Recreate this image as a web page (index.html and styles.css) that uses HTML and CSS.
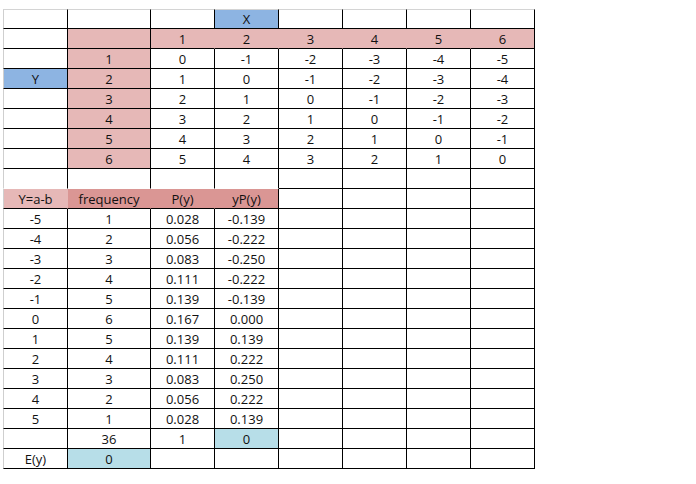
FILE: index.html
```html
<!DOCTYPE html>
<html>
<head>
<meta charset="utf-8">
<link rel="stylesheet" href="styles.css">
</head>
<body>
<div class="sheet">
  <div class="c a t"></div><div class="c t"></div><div class="c t"></div><div class="c t bl">X</div><div class="c t"></div><div class="c t"></div><div class="c t"></div><div class="c t"></div>

  <div class="c a"></div><div class="c pk"></div><div class="c pk nr">1</div><div class="c pk nr">2</div><div class="c pk nr">3</div><div class="c pk nr">4</div><div class="c pk nr">5</div><div class="c pk">6</div>

  <div class="c a"></div><div class="c pk">1</div><div class="c">0</div><div class="c">-1</div><div class="c">-2</div><div class="c">-3</div><div class="c">-4</div><div class="c">-5</div>
  <div class="c a bl">Y</div><div class="c pk">2</div><div class="c">1</div><div class="c">0</div><div class="c">-1</div><div class="c">-2</div><div class="c">-3</div><div class="c">-4</div>
  <div class="c a"></div><div class="c pk">3</div><div class="c">2</div><div class="c">1</div><div class="c">0</div><div class="c">-1</div><div class="c">-2</div><div class="c">-3</div>
  <div class="c a"></div><div class="c pk">4</div><div class="c">3</div><div class="c">2</div><div class="c">1</div><div class="c">0</div><div class="c">-1</div><div class="c">-2</div>
  <div class="c a"></div><div class="c pk">5</div><div class="c">4</div><div class="c">3</div><div class="c">2</div><div class="c">1</div><div class="c">0</div><div class="c">-1</div>
  <div class="c a"></div><div class="c pk">6</div><div class="c">5</div><div class="c">4</div><div class="c">3</div><div class="c">2</div><div class="c">1</div><div class="c">0</div>

  <div class="c a nb"></div><div class="c nb"></div><div class="c nb"></div><div class="c nb"></div><div class="c"></div><div class="c"></div><div class="c"></div><div class="c"></div>

  <div class="c a pk nr">Y=a-b</div><div class="c pd nr">frequency</div><div class="c pd nr">P(y)</div><div class="c pd">yP(y)</div><div class="c"></div><div class="c"></div><div class="c"></div><div class="c"></div>

  <div class="c a">-5</div><div class="c">1</div><div class="c">0.028</div><div class="c">-0.139</div><div class="c"></div><div class="c"></div><div class="c"></div><div class="c"></div>
  <div class="c a">-4</div><div class="c">2</div><div class="c">0.056</div><div class="c">-0.222</div><div class="c"></div><div class="c"></div><div class="c"></div><div class="c"></div>
  <div class="c a">-3</div><div class="c">3</div><div class="c">0.083</div><div class="c">-0.250</div><div class="c"></div><div class="c"></div><div class="c"></div><div class="c"></div>
  <div class="c a">-2</div><div class="c">4</div><div class="c">0.111</div><div class="c">-0.222</div><div class="c"></div><div class="c"></div><div class="c"></div><div class="c"></div>
  <div class="c a">-1</div><div class="c">5</div><div class="c">0.139</div><div class="c">-0.139</div><div class="c"></div><div class="c"></div><div class="c"></div><div class="c"></div>
  <div class="c a">0</div><div class="c">6</div><div class="c">0.167</div><div class="c">0.000</div><div class="c"></div><div class="c"></div><div class="c"></div><div class="c"></div>
  <div class="c a">1</div><div class="c">5</div><div class="c">0.139</div><div class="c">0.139</div><div class="c"></div><div class="c"></div><div class="c"></div><div class="c"></div>
  <div class="c a">2</div><div class="c">4</div><div class="c">0.111</div><div class="c">0.222</div><div class="c"></div><div class="c"></div><div class="c"></div><div class="c"></div>
  <div class="c a">3</div><div class="c">3</div><div class="c">0.083</div><div class="c">0.250</div><div class="c"></div><div class="c"></div><div class="c"></div><div class="c"></div>
  <div class="c a">4</div><div class="c">2</div><div class="c">0.056</div><div class="c">0.222</div><div class="c"></div><div class="c"></div><div class="c"></div><div class="c"></div>
  <div class="c a">5</div><div class="c">1</div><div class="c">0.028</div><div class="c">0.139</div><div class="c"></div><div class="c"></div><div class="c"></div><div class="c"></div>
  <div class="c a"></div><div class="c">36</div><div class="c">1</div><div class="c lb">0</div><div class="c"></div><div class="c"></div><div class="c"></div><div class="c"></div>
  <div class="c a">E(y)</div><div class="c lb">0</div><div class="c"></div><div class="c"></div><div class="c"></div><div class="c"></div><div class="c"></div><div class="c"></div>
</div>
</body>
</html>
```
FILE: styles.css
```css
html, body {
  margin: 0;
  padding: 0;
  background: #ffffff;
}

body {
  font-family: "Open Sans", "Liberation Sans", sans-serif;
  font-size: 13px;
  color: #111111;
}

.sheet {
  display: grid;
  grid-template-columns: 65px 83px repeat(6, 64px);
  grid-auto-rows: 20px;
  margin: 9px 0 0 3px;
  width: max-content;
}

.c {
  box-sizing: border-box;
  border-right: 1px solid #000;
  border-bottom: 1px solid #000;
  text-align: center;
  line-height: 17px;
  padding-top: 2px;
  overflow: hidden;
  white-space: nowrap;
}

.a {
  border-left: 1px solid #cfcfcf;
}

.t {
  border-top: 1px solid #d4d4d4;
  padding-top: 1px;
}

.nr {
  border-right-color: transparent;
}

.nb {
  border-bottom-color: transparent;
}

.pk {
  background: #e6b8b7;
}

.pd {
  background: #da9694;
}

.bl {
  background: #8db4e2;
}

.lb {
  background: #b7dee8;
}
```
